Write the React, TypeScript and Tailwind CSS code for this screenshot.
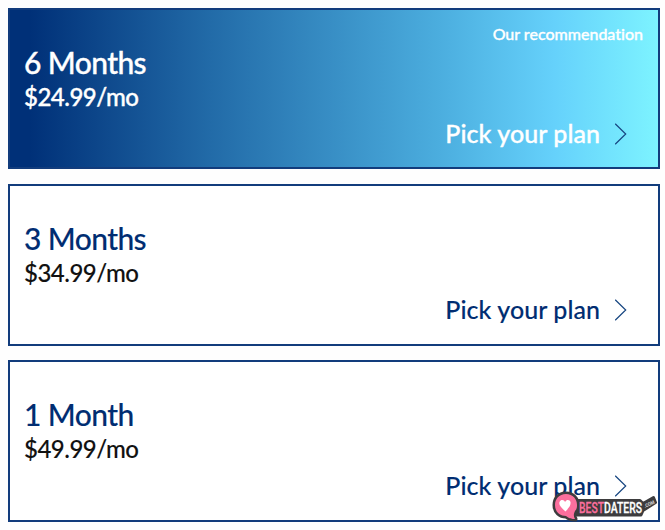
type Plan = { name: string; price: string; featured?: boolean };

const plans: Plan[] = [
  { name: "6 Months", price: "$24.99/mo", featured: true },
  { name: "3 Months", price: "$34.99/mo" },
  { name: "1 Month", price: "$49.99/mo" },
];

function PlanCard({ name, price, featured }: Plan) {
  return (
    <section
      className={`flex w-[652px] flex-col border-2 border-[#123c7c] px-[14px] ${
        featured
          ? "h-[161px] bg-[linear-gradient(90deg,#003078_3%,#226ba8_31%,#4badde_66%,#65d1fb_84%,#7df3ff_100%)] text-white [-webkit-text-stroke:0.35px]"
          : "h-[162px] bg-white text-[#002d72] [-webkit-text-stroke:0.12px]"
      }`}
    >
      <div className="h-[34px] pt-[14px] pr-px text-right text-[16px] leading-5 font-medium [font-variant-ligatures:none]">
        {featured && <span>Our recommendation</span>}
      </div>
      <h2 className="text-[30px] leading-[36px] font-medium tracking-[-0.6px]">{name}</h2>
      <p className={`mt-[2px] text-[24px] leading-[30px] font-medium tracking-[-0.5px] ${featured ? "text-white" : "text-[#111]"}`}>{price}</p>
      <button className="mt-[6px] flex items-center justify-end gap-[15px] pr-[17px] text-[25px] leading-[32px] font-medium tracking-[0.05px]">
        <span className="-mt-px">Pick your plan</span>
        <svg className="h-[22px] w-[12px]" viewBox="0 0 12 22" fill="none" stroke="#174681" strokeWidth="1.2">
          <path d="M.2.8 10.7 11 .2 21.2" />
        </svg>
      </button>
    </section>
  );
}

function Watermark() {
  return (
    <svg className="absolute top-[488px] left-[550px] h-[36px] w-[110px]" viewBox="0 0 110 36">
      <g fill="#3d3c3e" stroke="#3d3c3e" strokeLinejoin="round">
        <path strokeWidth="5" d="M16 6C9 6 5 11 5 17c0 7 5 11 11 11 4 3 6 3 9 3-2-3-1-6 0-8 2-2 2-4 2-6 0-6-4-11-11-11Z" />
        <path strokeWidth="3" d="M26 12.5h64l3 3 10.500-6 2 5-12.500 8-2 4.500H26Z" />
      </g>
      <path fill="#fb6f9d" d="M16 6C9 6 5 11 5 17c0 7 5 11 11 11 4 3 6 3 9 3-2-3-1-6 0-8 2-2 2-4 2-6 0-6-4-11-11-11Z" />
      <path fill="#fff" d="M15.500 23.500c-4-4-7-6-6-9.500 1-3 5-2.500 5.500 0 1.500-3 5-2.500 5.500 0 .500 3.500-1.500 5.500-5 9.500Z" />
      <text x="29" y="24.800" fontSize="15" fontWeight="500" strokeWidth=".3" textLength="63" lengthAdjust="spacingAndGlyphs" fontFamily="Roboto, sans-serif">
        <tspan fill="#fb6f9d" stroke="#fb6f9d">BEST</tspan><tspan fill="#fff" stroke="#fff">DATERS</tspan>
      </text>
      <text transform="translate(95 20) rotate(-25)" fontSize="5" fontWeight="700" fill="#ddd" textLength="11" lengthAdjust="spacingAndGlyphs" fontFamily="Roboto, sans-serif">.COM</text>
    </svg>
  );
}

export default function App() {
  return (
    <main className="relative flex h-[530px] w-[665px] flex-col gap-[14px] overflow-hidden bg-[#fefefe] pt-[8px] pl-[8px] font-['Lato',sans-serif] [&>section:first-child]:mb-px">
      {plans.map((plan) => (
        <PlanCard key={plan.name} {...plan} />
      ))}
      <Watermark />
    </main>
  );
}
